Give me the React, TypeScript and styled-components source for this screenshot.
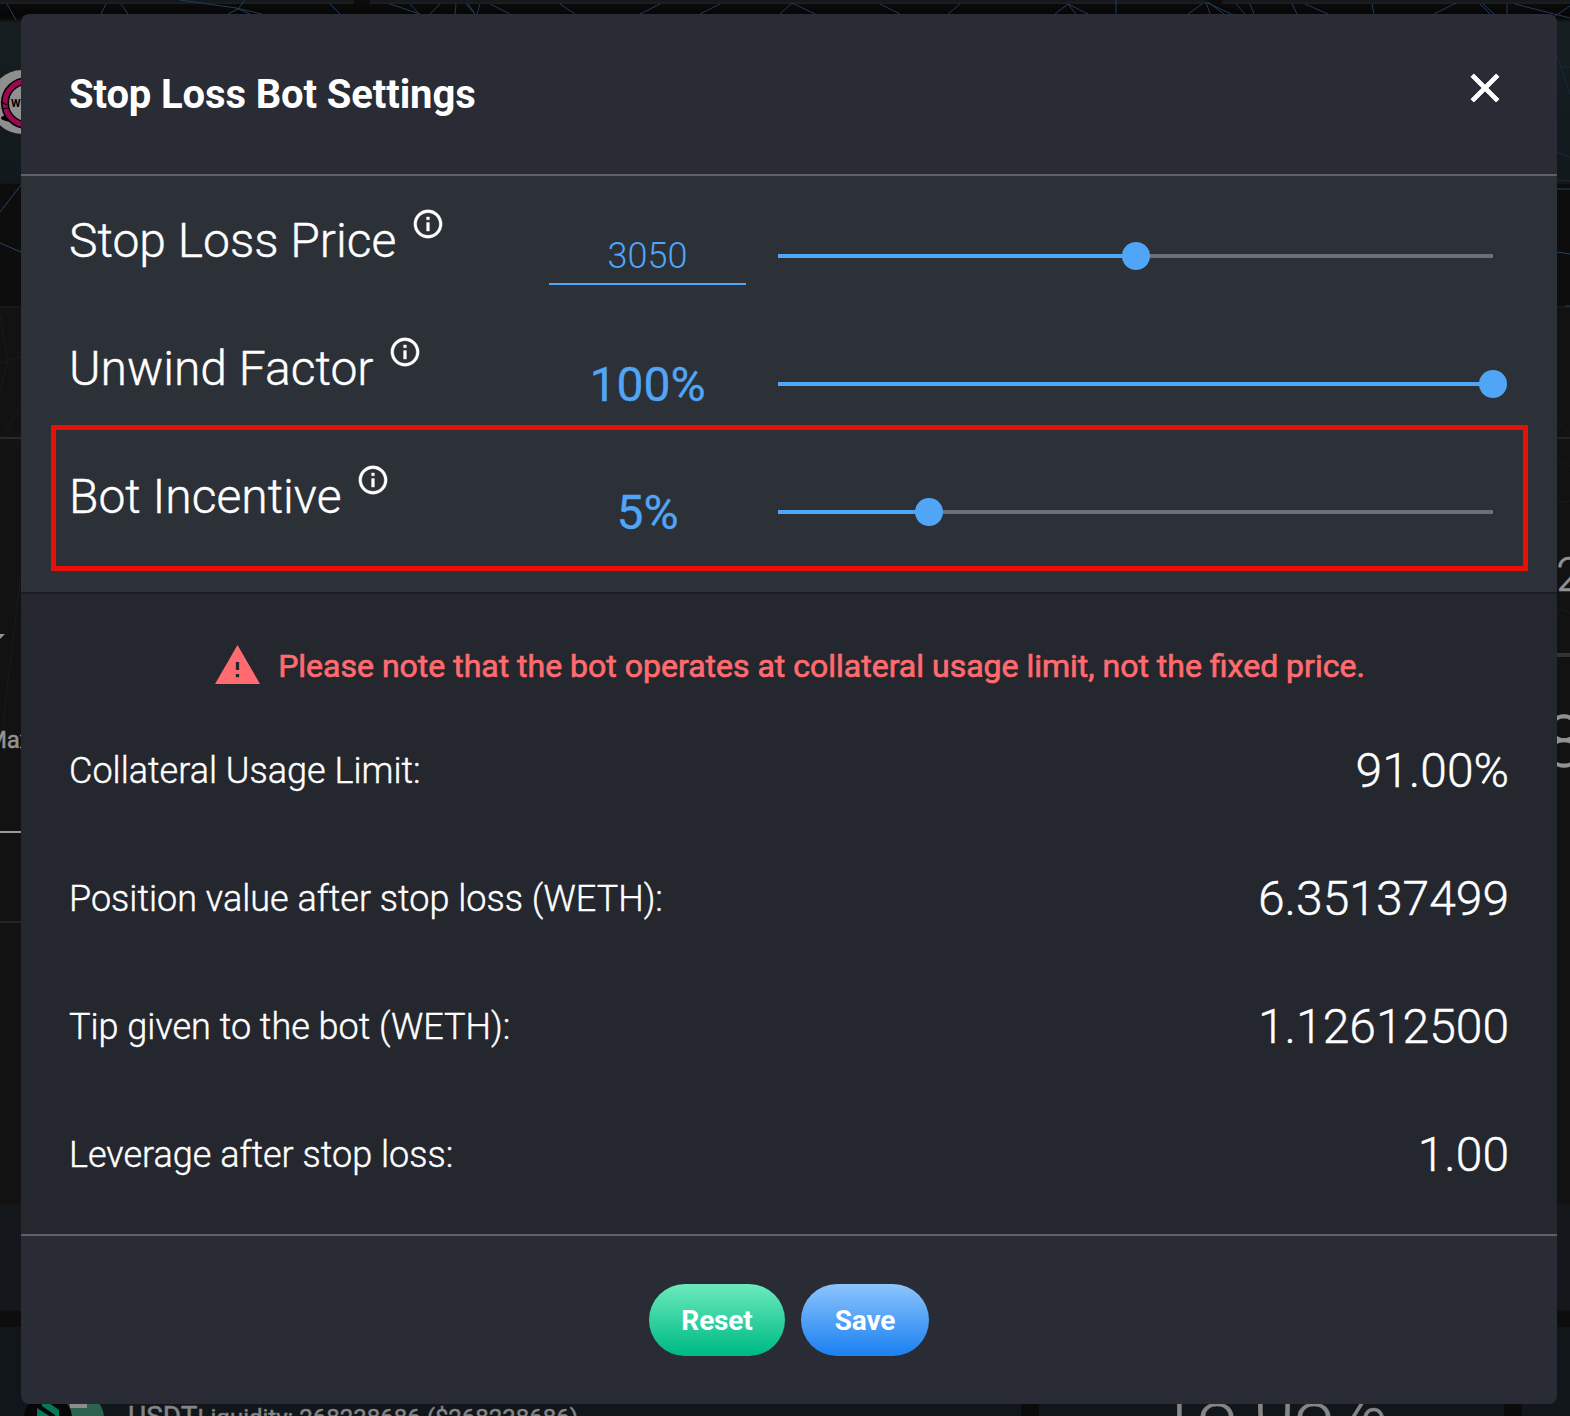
import React from "react";
import styled, { createGlobalStyle } from "styled-components";

const Global = createGlobalStyle`
  html, body { margin: 0; padding: 0; background: #0c0c0c; }
  *, *::before, *::after { box-sizing: border-box; }
  body { font-family: Roboto, "Liberation Sans", sans-serif; color: #fff; overflow: hidden; }
`;

const BLUE = "#51a5f7";

const Screen = styled.div`
  position: relative;
  width: 1570px;
  height: 1416px;
  overflow: hidden;
  background: #0d0d0d;
`;

/* ---------- dimmed page behind the dialog ---------- */

const Page = styled.div`
  display: flex;
  flex-direction: column;
  width: 100%;
  height: 100%;
`;

const Mesh = styled.svg`
  position: absolute;
  inset: 0;
  pointer-events: none;
`;

const TopCards = styled.div`
  flex: none;
  display: grid;
  grid-template-columns: 354px 836px 1fr;
  gap: 16px;
  height: 20px;
  background: linear-gradient(#0d0d0d, #060606 70%, #0c0c0c);
`;

const TopCard = styled.div`
  height: 4px;
  background: #14191d;
  border-bottom: 2px solid #1b1d1f;
`;

const Band = styled.div<{ $h: number; $gap: number; $bg: string }>`
  flex: none;
  display: flex;
  height: ${(p) => p.$h}px;
  margin-bottom: ${(p) => p.$gap}px;
  background: ${(p) => p.$bg};
  border-top: 2px solid #151515;
  border-bottom: 2px solid #151515;
`;

const TokenLogo = styled.svg`
  flex: none;
  margin: 48px 0 0 -10px;
`;

const Details = styled.div`
  flex: none;
  display: flex;
  justify-content: space-between;
  height: 897px;
  background: #121212;
  border-top: 2px solid #171717;
`;

const Strip = styled.div<{ $w: number }>`
  display: flex;
  flex-direction: column;
  width: ${(p) => p.$w}px;
  height: 895px;
  overflow: hidden;
  color: #929292;
`;

const Rule = styled.div<{ $top: number; $h?: number; $c: string }>`
  flex: none;
  height: ${(p) => p.$h ?? 2}px;
  margin-top: ${(p) => p.$top}px;
  background: ${(p) => p.$c};
`;

const Caret = styled.svg`
  flex: none;
  margin: 195px 0 0 -7px;
`;

const SmallCaption = styled.div`
  margin: 86px 0 0 -14px;
  font-size: 24px;
  line-height: 28px;
  letter-spacing: -0.2px;
  -webkit-text-stroke: 0.5px;
`;

const EdgeNumber = styled.div<{ $size: number; $top: number; $left: number }>`
  flex: none;
  margin: ${(p) => p.$top}px 0 0 ${(p) => p.$left}px;
  font-size: ${(p) => p.$size}px;
  line-height: ${(p) => p.$size}px;
  font-weight: 300;
  -webkit-text-stroke: 0.4px;
`;

const Pools = styled.div`
  flex: none;
  display: grid;
  grid-template-columns: 1021px 465px 1fr;
  gap: 18px;
  height: 130px;
  background: #0b0b0b;
`;

const PoolCard = styled.div`
  display: flex;
  overflow: hidden;
  background: #11161a;
  border-top: 2px solid #151515;
  color: #858585;
`;

const PoolLogos = styled.svg`
  flex: none;
  margin: 65px 0 0 24px;
`;

const PoolText = styled.div`
  display: flex;
  align-items: baseline;
  margin: 71px 0 0 22px;
  height: 34px;
  white-space: nowrap;
  font-size: 24px;
  line-height: 34px;
  -webkit-text-stroke: 0.5px;
`;

const PoolName = styled.span`
  font-size: 28px;
`;

const PoolRate = styled.div`
  margin: 36px 0 0 118px;
  font-size: 72px;
  line-height: 84px;
  font-weight: 300;
  -webkit-text-stroke: 0.4px;
`;

/* ---------- dialog ---------- */

const Overlay = styled.div`
  position: absolute;
  inset: 0;
  padding: 14px 13px 12px 21px;
`;

const Dialog = styled.section`
  display: flex;
  flex-direction: column;
  width: 1536px;
  height: 1390px;
  border-radius: 8px;
  overflow: hidden;
  background: #292c34;
`;

const Header = styled.header`
  display: flex;
  justify-content: space-between;
  flex: none;
  height: 162px;
  padding: 50px 48px 0;
  border-bottom: 2px solid #606167;
`;

const Title = styled.h1`
  margin: 7px 0 0;
  font-size: 40px;
  line-height: 48px;
  font-weight: 700;
  letter-spacing: -0.12px;
`;

const CloseButton = styled.button`
  display: flex;
  width: 48px;
  height: 48px;
  padding: 0;
  border: 0;
  background: none;
  color: #fff;
`;

const Controls = styled.div`
  flex: none;
  height: 418px;
  padding: 16px 48px;
  background: #2c3037;
  border-bottom: 2px solid #1a1d21;
`;

const ControlRow = styled.div`
  position: relative;
  display: grid;
  grid-template-columns: 480px 197px 715px;
  height: 128px;
`;

const ControlLabel = styled.div`
  display: flex;
  padding-top: 21px;
  font-size: 48px;
  line-height: 56px;
  font-weight: 300;
  white-space: nowrap;
  -webkit-text-stroke: 0.4px;
`;

const InfoIcon = styled.svg`
  margin: -6px 0 0 15px;
`;

const PriceField = styled.div`
  align-self: start;
  height: 57px;
  margin-top: 36px;
  padding-top: 1px;
  border-bottom: 2px solid ${BLUE};
  color: ${BLUE};
  font-size: 36px;
  line-height: 55px;
  font-weight: 300;
  text-align: center;
`;

const Percent = styled.div`
  align-self: center;
  padding-top: 2px;
  color: ${BLUE};
  font-size: 48px;
  line-height: 56px;
  text-align: center;
  -webkit-text-stroke: 0.3px;
`;

const Track = styled.div`
  display: flex;
  align-items: center;
  align-self: center;
  width: 715px;
  height: 28px;
  margin-left: 32px;
  background: linear-gradient(#6c6f73, #6c6f73) center / 100% 4px no-repeat;
`;

const Fill = styled.div`
  flex: none;
  height: 4px;
  background: ${BLUE};
`;

const Thumb = styled.div`
  flex: none;
  width: 28px;
  height: 28px;
  margin-left: -14px;
  border-radius: 50%;
  background: ${BLUE};
`;

const Highlight = styled.div`
  position: absolute;
  left: -18px;
  top: -23px;
  width: 1477px;
  height: 146px;
  border: 5px solid #e81009;
`;

const Summary = styled.div`
  flex: none;
  height: 642px;
  padding: 44px 48px 0;
  background: #24272e;
  border-bottom: 2px solid #606167;
`;

const Notice = styled.div`
  display: flex;
  justify-content: center;
  align-items: center;
  gap: 16px;
  height: 56px;
  margin-bottom: 12px;
  color: #ff6b6e;
  font-size: 32px;
  line-height: 40px;
  font-weight: 400;
  white-space: nowrap;
  -webkit-text-stroke: 0.7px;
`;

const NoticeIcon = styled.svg`
  flex: none;
  margin-top: -2px;
`;

const StatRow = styled.div`
  display: flex;
  justify-content: space-between;
  align-items: center;
  height: 128px;
`;

const StatLabel = styled.span`
  padding-top: 2px;
  font-size: 36px;
  font-weight: 300;
  -webkit-text-stroke: 0.4px;
`;

const StatValue = styled.span`
  font-size: 48px;
  font-weight: 300;
  -webkit-text-stroke: 0.4px;
`;

const Footer = styled.footer`
  display: flex;
  justify-content: center;
  gap: 16px;
  padding-top: 48px;
`;

const Button = styled.button<{ $w: number; $from: string; $to: string }>`
  width: ${(p) => p.$w}px;
  height: 72px;
  padding: 2px 0 0;
  border: 0;
  border-radius: 36px;
  background: linear-gradient(${(p) => p.$from}, ${(p) => p.$to} 95%);
  color: #fff;
  font: 700 28px/70px Roboto, "Liberation Sans", sans-serif;
  letter-spacing: -0.15px;
`;

const Info = () => (
  <InfoIcon width="34" height="34" viewBox="0 0 24 24" fill="#fff" stroke="#fff" strokeWidth="0.25">
    <path d="M11 7h2v2h-2zm0 4h2v6h-2zm1-9C6.48 2 2 6.48 2 12s4.48 10 10 10 10-4.48 10-10S17.52 2 12 2zm0 18c-4.41 0-8-3.59-8-8s3.59-8 8-8 8 3.59 8 8-3.59 8-8 8z" />
  </InfoIcon>
);

const Slider = ({ value }: { value: number }) => (
  <Track>
    <Fill style={{ width: `${value}%` }} />
    <Thumb />
  </Track>
);

const stats: [string, string][] = [
  ["Collateral Usage Limit:", "91.00%"],
  ["Position value after stop loss (WETH):", "6.35137499"],
  ["Tip given to the bot (WETH):", "1.12612500"],
  ["Leverage after stop loss:", "1.00"],
];

const topLines =
  "M7 4L16 20M106 4L101 14M121 4L128 14M180 0L236 8L262 14M245 0L238 9L228 14M236 8L250 14M330 4L340 14M390 4L420 14M410 4L419 14M456 4L455 14M466 4L475 14L468 4M477 14L480 4M440 4L430 14M490 4L510 14M1068 4L1055 14M1068 4L1088 14M1068 4L1076 14M1116 0V14M1202 4L1188 14M1206 2L1210 14M1206 2L1231 14M1208 2L1224 14M1236 4L1245 14M1250 4L1254 14M1292 4L1297 14M1305 4L1328 14M1372 4L1374 14M1456 3L1434 14M1480 4L1490 14M1483 4L1494 14M1507 4V14M1515 4L1570 18M1570 6L1555 16M560 4L575 14M640 14L660 4M720 4L700 14M780 14L792 3L815 14M880 4L900 14M960 4L948 14";

const App = () => (
  <Screen>
    <Global />
    <Page>
      <TopCards>
        <TopCard />
        <TopCard />
        <TopCard />
      </TopCards>
      <Band $h={164} $gap={122} $bg="linear-gradient(#171e22, #12191c)">
        <TokenLogo width="66" height="66" viewBox="0 0 66 66">
          <circle cx="32" cy="32" r="32" fill="#8f8f8f" />
          <ellipse cx="31" cy="48" rx="20" ry="4.5" fill="#000" />
          <circle cx="37" cy="33" r="22" fill="#909090" stroke="#000" strokeWidth="8" />
          <circle cx="37" cy="33" r="22" fill="none" stroke="#9b0a50" strokeWidth="5" />
          <path d="M11 32l6 3M12 39l6-1" stroke="#000" strokeWidth="1.2" />
          <text x="21" y="37" fontSize="11" fontWeight="700" fill="#000">
            WETH
          </text>
        </TokenLogo>
      </Band>
      <Details>
        <Strip $w={21}>
          <Rule $top={129} $c="#2a2a2a" />
          <Caret width="14" height="6" viewBox="0 0 14 6">
            <path d="M0 0h12L6 6z" fill="#929292" />
          </Caret>
          <SmallCaption>Max</SmallCaption>
          <Rule $top={77} $c="#999999" />
          <Rule $top={88} $c="#242424" />
        </Strip>
        <Strip $w={13}>
          <Rule $top={129} $c="#242424" />
          <EdgeNumber $size={48} $top={112} $left={-1}>2</EdgeNumber>
          <Rule $top={54} $h={4} $c="#333333" />
          <EdgeNumber $size={72} $top={50} $left={-13}>8</EdgeNumber>
        </Strip>
      </Details>
      <Band $h={108} $gap={16} $bg="#14181d" />
      <Pools>
        <PoolCard>
          <PoolLogos width="82" height="48" viewBox="0 0 82 48">
            <circle cx="56" cy="24" r="24" fill="#2b6350" />
            <path d="M46 9h17v5H46z" fill="#8c8c8c" />
            <circle cx="24" cy="24" r="24" fill="#050708" />
            <path d="M13 14l14 9v12l-14-9zM18 7l4 0L35 16v16h-4V21L18 12z" fill="#067a54" />
          </PoolLogos>
          <PoolText>
            <PoolName>USDT</PoolName>
            <span>Liquidity: 268238686 ($268238686)</span>
          </PoolText>
        </PoolCard>
        <PoolCard>
          <PoolRate>18.08%</PoolRate>
        </PoolCard>
        <PoolCard />
      </Pools>
    </Page>
    <Mesh width="1570" height="1416" fill="none">
      <path d={topLines} stroke="#1f3d5c" />
      <path d="M21 185L0 212M0 243L21 252M1557 189H1570M1557 252L1570 254M1565 306H1570" stroke="#24456a" />
      <path d="M1557 55L1570 95M1557 67H1570M1557 152L1570 157M1557 180L1570 181" stroke="#19293a" />
      <path d="M0 315L8 361L0 389M0 363L21 357M21 405L0 442M21 439L0 461M20 580L3 724M1557 422L1570 434M1557 460L1570 466M1557 503L1570 501M1557 608L1570 613" stroke="#171c21" />
    </Mesh>

    <Overlay>
      <Dialog>
        <Header>
          <Title>Stop Loss Bot Settings</Title>
          <CloseButton aria-label="Close">
            <svg width="48" height="48" viewBox="0 0 24 24" fill="currentColor" stroke="currentColor" strokeWidth="0.5" strokeLinejoin="round">
              <path d="M19 6.41L17.59 5 12 10.59 6.41 5 5 6.41 10.59 12 5 17.59 6.41 19 12 13.41 17.59 19 19 17.59 13.41 12z" />
            </svg>
          </CloseButton>
        </Header>
        <Controls>
          <ControlRow>
            <ControlLabel>
              Stop Loss Price
              <Info />
            </ControlLabel>
            <PriceField>3050</PriceField>
            <Slider value={50} />
          </ControlRow>
          <ControlRow>
            <ControlLabel>
              Unwind Factor
              <Info />
            </ControlLabel>
            <Percent>100%</Percent>
            <Slider value={100} />
          </ControlRow>
          <ControlRow>
            <ControlLabel>
              Bot Incentive
              <Info />
            </ControlLabel>
            <Percent>5%</Percent>
            <Slider value={21.1} />
            <Highlight />
          </ControlRow>
        </Controls>
        <Summary>
          <Notice>
            <NoticeIcon width="49" height="49" viewBox="0 0 24 24" fill="currentColor">
              <path d="M1 21h22L12 2zM12.8 17.7h-1.6v-1.5h1.6zM12.8 14.2h-1.6v-3.9h1.6z" fillRule="evenodd" />
            </NoticeIcon>
            Please note that the bot operates at collateral usage limit, not the fixed price.
          </Notice>
          {stats.map(([label, value]) => (
            <StatRow key={label}>
              <StatLabel>{label}</StatLabel>
              <StatValue>{value}</StatValue>
            </StatRow>
          ))}
        </Summary>
        <Footer>
          <Button $w={136} $from="#6deabd" $to="#00bb85">
            Reset
          </Button>
          <Button $w={128} $from="#8cc4fd" $to="#1f83f2">
            Save
          </Button>
        </Footer>
      </Dialog>
    </Overlay>
  </Screen>
);

export default App;
